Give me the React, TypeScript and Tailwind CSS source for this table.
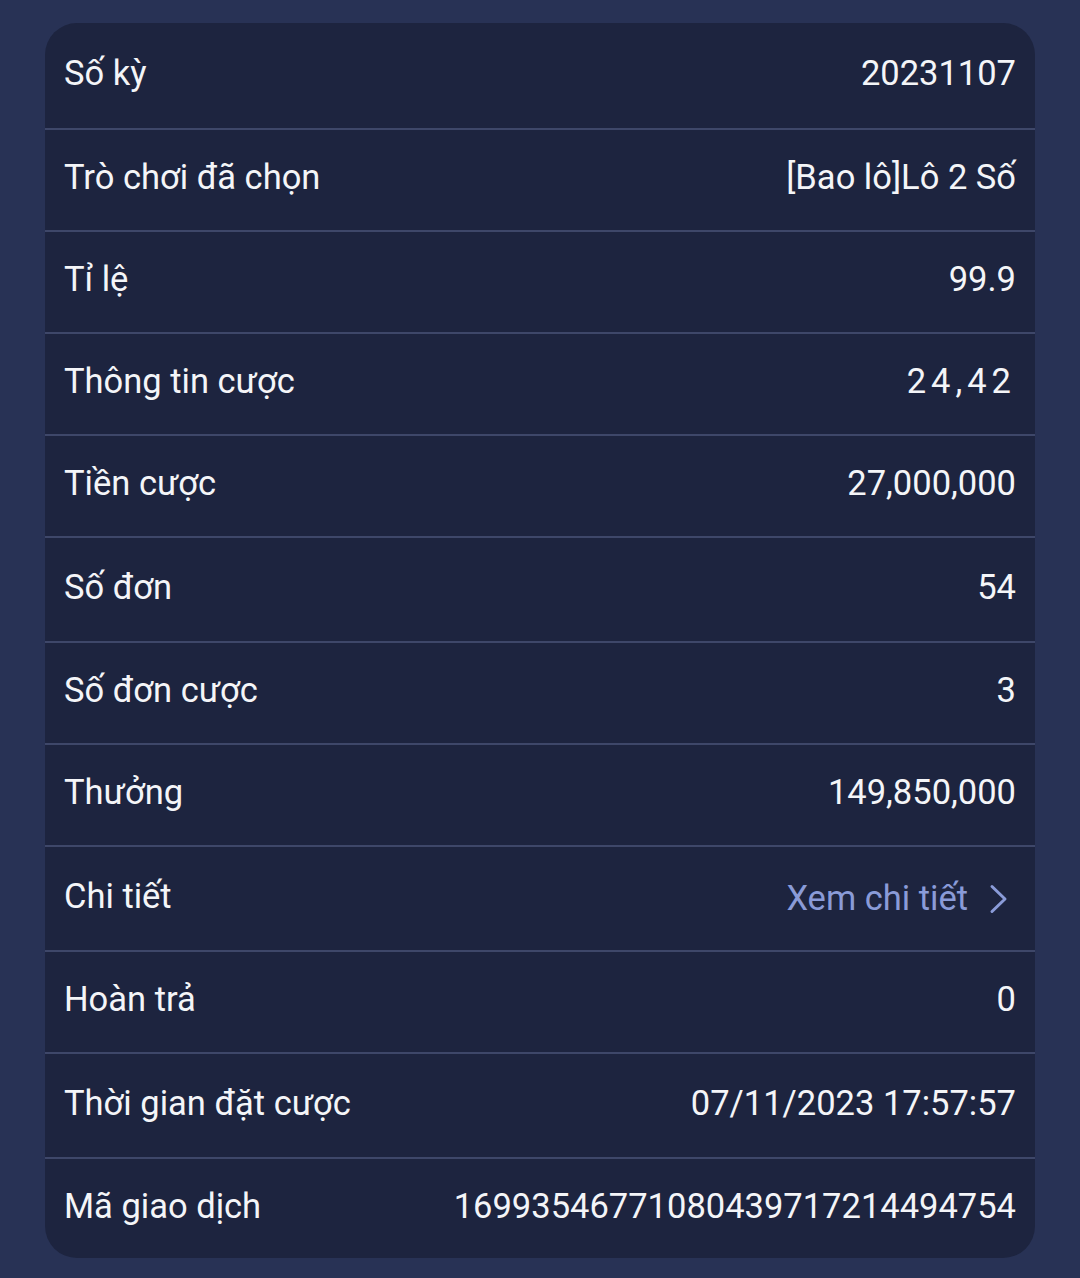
import React from "react";

type Row = { label: string; value: React.ReactNode; h: string; last?: boolean };

function Chevron() {
  return (
    <svg width="20" height="30" viewBox="0 0 20 30" fill="none" className="ml-[21px] mr-[7px]">
      <path d="M3 2.5 L16 15 L3 27.5" stroke="#8a9bd8" strokeWidth="3" strokeLinecap="round" strokeLinejoin="round" />
    </svg>
  );
}

export default function App() {
  const rows: Row[] = [
    { label: "Số kỳ", value: "20231107", h: "h-[107px]" },
    { label: "Trò chơi đã chọn", value: "[Bao lô]Lô 2 Số", h: "h-[102px]" },
    { label: "Tỉ lệ", value: "99.9", h: "h-[102px]" },
    { label: "Thông tin cược", value: <span className="tracking-[5px]">24,42</span>, h: "h-[102px]" },
    { label: "Tiền cược", value: "27,000,000", h: "h-[102px]" },
    { label: "Số đơn", value: "54", h: "h-[105px]" },
    { label: "Số đơn cược", value: "3", h: "h-[102px]" },
    { label: "Thưởng", value: "149,850,000", h: "h-[102px]" },
    {
      label: "Chi tiết",
      value: (
        <span className="flex items-center text-[#8a9bd8] pt-[4px]">
          Xem chi tiết
          <Chevron />
        </span>
      ),
      h: "h-[105px]",
    },
    { label: "Hoàn trả", value: "0", h: "h-[102px]" },
    { label: "Thời gian đặt cược", value: "07/11/2023 17:57:57", h: "h-[105px]" },
    { label: "Mã giao dịch", value: "16993546771080439717214494754", h: "h-[99px]", last: true },
  ];

  return (
    <div
      className="w-[1080px] h-[1278px] bg-[#283255] pt-[23px] px-[45px]"
      style={{ fontFamily: "Roboto, 'Noto Sans', sans-serif" }}
    >
      <div className="bg-[#1d243f] rounded-[32px] overflow-hidden">
        {rows.map((r, i) => (
          <div
            key={i}
            className={`${r.h} flex items-center justify-between px-[19px] pb-[4px] text-[34.5px] text-[#f4f5f8] ${
              r.last ? "" : "border-b-2 border-[#3e4769]"
            }`}
          >
            <span>{r.label}</span>
            <span className="flex items-center">{r.value}</span>
          </div>
        ))}
      </div>
    </div>
  );
}
